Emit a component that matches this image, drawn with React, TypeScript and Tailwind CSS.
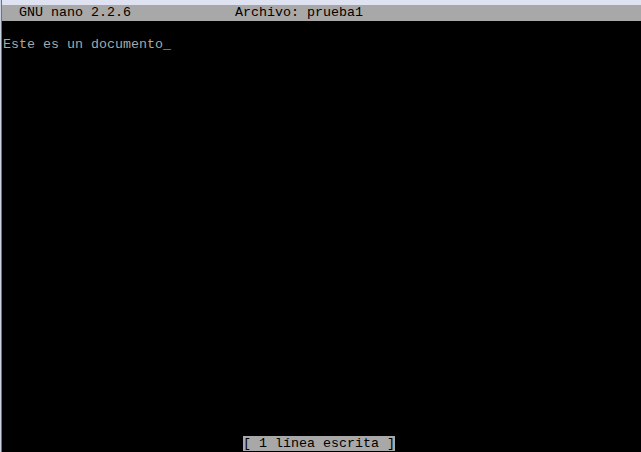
import React from "react";

const mono = "font-['Liberation_Mono','DejaVu_Sans_Mono',monospace] text-[13.33px] leading-4 whitespace-pre";

const NanoScreen = () => {
  return (
    <div className="flex h-[452px] w-[641px] overflow-hidden bg-black">
      {/* window border on the left */}
      <div className="w-px bg-[#cbd3e3]" />
      <div className="w-px bg-[#6b7283]" />
      <div className="flex flex-1 flex-col">
        <div className="h-[5px] bg-[#dfe3f1]" />
        <div className={`h-4 bg-[#a8a8a8] pl-px text-black ${mono}`}>
          {"  GNU nano 2.2.6             Archivo: prueba1"}
        </div>
        <div className="h-4" />
        <div className={`h-4 pl-px text-[#a8a8a8] ${mono}`}>
          {"Este es un documento"}
          <span className="text-[#c0c0c0]">_</span>
        </div>
        <div className="h-[384px]" />
        <div className={`h-4 pl-px text-[#a8a8a8] ${mono}`}>
          {"                              "}
          <span className="bg-[#a8a8a8] text-black">{"[ 1 línea escrita ]"}</span>
        </div>
      </div>
    </div>
  );
};

export default function App() {
  return <NanoScreen />;
}
